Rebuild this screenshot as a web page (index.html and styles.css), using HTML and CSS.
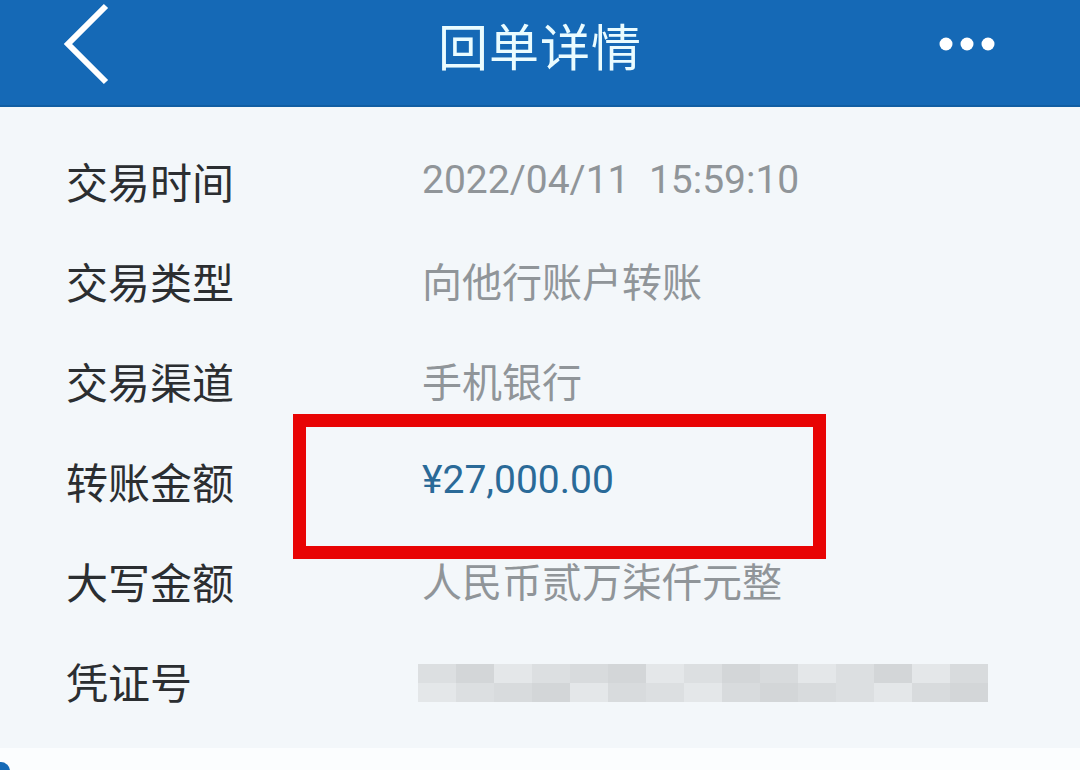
FILE: index.html
```html
<!DOCTYPE html>
<html lang="zh-CN">
<head>
  <meta charset="UTF-8" />
  <title>回单详情</title>
  <link rel="stylesheet" href="styles.css">
</head>
<body>
  <header class="topbar">
    <svg class="back" width="60" height="88" viewBox="0 0 60 88">
      <polyline points="44,6 6,44 44,82" fill="none" stroke="#ffffff" stroke-width="6" />
    </svg>
    <h1>回单详情</h1>
    <svg class="more" width="60" height="20" viewBox="0 0 60 20">
      <circle cx="8" cy="10" r="6.5" fill="#ffffff" />
      <circle cx="29" cy="10" r="6.5" fill="#ffffff" />
      <circle cx="50" cy="10" r="6.5" fill="#ffffff" />
    </svg>
  </header>

  <main class="detail">
    <div class="row"><span class="label">交易时间</span><span class="value num">2022/04/11&nbsp;&nbsp;15:59:10</span></div>
    <div class="row"><span class="label">交易类型</span><span class="value">向他行账户转账</span></div>
    <div class="row"><span class="label">交易渠道</span><span class="value">手机银行</span></div>
    <div class="row"><span class="label">转账金额</span><span class="value num amount">¥27,000.00</span></div>
    <div class="row"><span class="label">大写金额</span><span class="value">人民币贰万柒仟元整</span></div>
    <div class="row"><span class="label">凭证号</span>
      <span class="mosaic">
        <span class="m a"></span><span class="m b"></span><span class="m c"></span><span class="m a"></span><span class="m d"></span><span class="m b"></span><span class="m c"></span><span class="m a"></span><span class="m b"></span><span class="m d"></span><span class="m c"></span><span class="m a"></span><span class="m b"></span><span class="m c"></span><span class="m d"></span>
        <span class="m c"></span><span class="m a"></span><span class="m d"></span><span class="m b"></span><span class="m c"></span><span class="m d"></span><span class="m a"></span><span class="m c"></span><span class="m d"></span><span class="m b"></span><span class="m d"></span><span class="m a"></span><span class="m c"></span><span class="m d"></span><span class="m b"></span>
      </span>
    </div>
    <div class="highlight"></div>
  </main>

  <footer class="bottom">
    <span class="dot"></span>
  </footer>
</body>
</html>
```

FILE: styles.css
```css
body {
  margin: 0;
  width: 1080px;
  height: 770px;
  overflow: hidden;
  background-color: #f3f7fa;
  font-family: Roboto, "Noto Sans CJK SC", sans-serif;
}

.topbar {
  height: 88px;
  padding-bottom: 17px;
  background-color: #1569b6;
  border-bottom: 2px solid #115ea3;
  display: flex;
  align-items: center;
  justify-content: space-between;
  padding-left: 62px;
  padding-right: 82px;
}

.topbar h1 {
  margin: 0;
  font-family: "Noto Sans CJK SC", sans-serif;
  font-weight: 400;
  font-size: 50px;
  color: #eafcff;
  letter-spacing: 1px;
  position: relative;
  left: 10px;
}

.detail {
  position: relative;
  padding-top: 23px;
  height: 618px;
}

.row {
  height: 100px;
  display: flex;
  align-items: center;
}

.row:last-of-type {
  height: 104px;
}

.label {
  width: 356px;
  padding-left: 66px;
  font-family: "Noto Sans CJK SC", sans-serif;
  font-size: 42px;
  color: #2b2e31;
}

.value {
  font-family: "Noto Sans CJK SC", sans-serif;
  font-size: 40px;
  color: #909599;
}

.value.num {
  font-family: Roboto, "Noto Sans CJK SC", sans-serif;
  font-size: 39px;
}

.value.amount {
  color: #2a6a98;
}

.mosaic {
  display: grid;
  grid-template-columns: repeat(15, 38px);
  grid-auto-rows: 19px;
  width: 570px;
  margin-left: -4px;
  margin-top: 6px;
}

.m.a { background-color: #dcdfe1; }
.m.b { background-color: #d3d6d8; }
.m.c { background-color: #e4e7e9; }
.m.d { background-color: #d8dbdd; }

.highlight {
  position: absolute;
  left: 293px;
  top: 307px;
  width: 507px;
  height: 119px;
  border: 13px solid #e80404;
}

.bottom {
  position: relative;
  height: 22px;
  background-color: #fbfdfe;
}

.bottom .dot {
  position: absolute;
  left: -8px;
  top: 14px;
  width: 18px;
  height: 18px;
  border-radius: 50%;
  background-color: #1569b6;
}
```
